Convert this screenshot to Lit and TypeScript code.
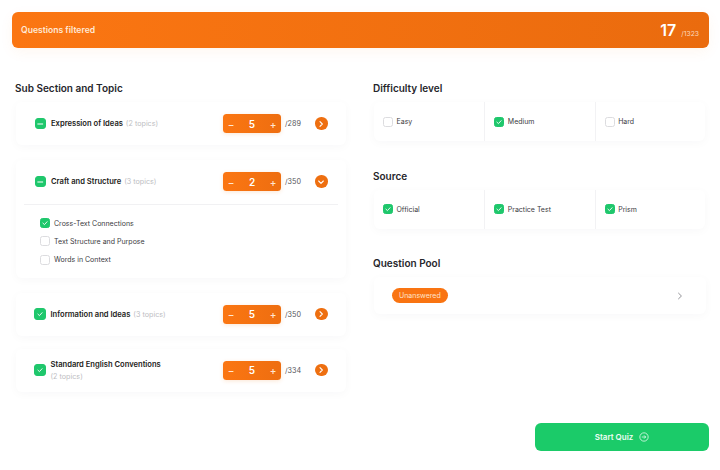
import { LitElement, html, css, nothing } from "lit";
import { customElement } from "lit/decorators.js";

const check = html`<svg viewBox="0 0 10 10" width="8" height="8"><path d="M2.4 5.2 4.3 7 7.6 3.4" fill="none" stroke="#fff" stroke-width="1.1" stroke-linecap="round" stroke-linejoin="round"/></svg>`;
const minus = html`<svg viewBox="0 0 12 12" width="10" height="10"><path d="M2.5 6h7" fill="none" stroke="#fff" stroke-width="1.4" stroke-linecap="round"/></svg>`;
const right = html`<svg viewBox="0 0 12 12" width="8" height="8"><path d="M4.5 2.5 8 6 4.5 9.5" fill="none" stroke="#fff" stroke-width="1.6" stroke-linecap="round" stroke-linejoin="round"/></svg>`;
const down = html`<svg viewBox="0 0 12 12" width="8" height="8"><path d="M2.5 4.5 6 8l3.5-3.5" fill="none" stroke="#fff" stroke-width="1.6" stroke-linecap="round" stroke-linejoin="round"/></svg>`;

@customElement("app-root")
export class AppRoot extends LitElement {
  static styles = css`
    :host { display: block; width: 720px; height: 470px; background: #fff; color: #1b1b1f; font-family: Inter, "Liberation Sans", sans-serif; overflow: hidden; }
    * { box-sizing: border-box; }
    .page { padding: 12px 11px 0 12px; display: flex; flex-direction: column; height: 470px; }
    .banner { height: 36px; border-radius: 6px; background: linear-gradient(90deg, #fb7612, #ea6b0e); color: #fff; display: flex; align-items: center; justify-content: space-between; padding: 0 10px 0 9px; box-shadow: 0 4px 14px rgba(240, 120, 20, .06); }
    .banner .lab { font-size: 8.6px; font-weight: 600; color: #ffe9d6; }
    .count { display: flex; align-items: baseline; gap: 5px; }
    .count b { font-size: 16px; font-weight: 600; }
    .count span { font-size: 6.8px; color: #fbd9bd; }
    .cols { display: grid; grid-template-columns: 332px 334px; column-gap: 26px; padding-left: 3px; margin-top: 34px; }
    .col { display: flex; flex-direction: column; }
    h2 { margin: 0 0 8px; font-size: 10px; line-height: 12px; font-weight: 600; color: #26262b; }
    .card { background: #fff; border-radius: 6px; box-shadow: 0 2px 10px rgba(30, 30, 60, .03); margin: 0 1px; }
    .topic { margin-bottom: 15px; }
    .topic.tight { margin-bottom: 13px; }
    .row { height: 43px; display: flex; align-items: center; padding: 0 0 0 19px; }
    .cb { flex: none; width: 10px; height: 10px; border-radius: 2.5px; display: flex; align-items: center; justify-content: center; border: 1px solid #dcdcdf; background: #fff; }
    .cb.on { background: #1fc76c; border-color: #1fc76c; }
    .cb.big { width: 10.5px; height: 10.5px; border-radius: 3px; }
    .cb.big.tick { width: 12px; height: 12px; margin-left: -1px; }
    .name { margin-left: 5.5px; padding-top: 1px; font-size: 7.6px; font-weight: 600; color: #1c1c20; white-space: nowrap; line-height: 12px; }
    .tick + .name { margin-left: 4.5px; }
    .muted { font-weight: 400; color: #bdbdc2; font-size: 7.2px; }
    .name .muted { margin-left: 1px; }
    .two .muted { display: block; margin-left: 0; }
    .spacer { flex: 1; }
    .stepper { width: 58px; height: 19px; border-radius: 3.5px; background: linear-gradient(90deg, #fb7612, #ee6e10); color: #fff; display: flex; align-items: center; justify-content: space-between; padding: 0 4px; font-size: 10px; font-weight: 600; box-shadow: 0 1px 4px rgba(240, 120, 20, .18); }
    .stepper i { font-style: normal; font-weight: 500; font-size: 10px; color: #ffe6d0; width: 8px; text-align: center; }
    .total { width: 30px; margin-left: 4px; font-size: 7.2px; color: #55555b; }
    .go { width: 12.5px; height: 12.5px; border-radius: 50%; background: #ee6f10; display: flex; align-items: center; justify-content: center; margin-right: 18.5px; }
    .divider { height: 1px; margin: 1px 8px 0; background: #f1f1f3; }
    .subs { padding: 13px 0 13px 24px; display: flex; flex-direction: column; gap: 8.3px; }
    .sub { height: 10px; display: flex; align-items: center; gap: 4px; font-size: 7px; color: #3b3b41; }
    .tiles { display: grid; grid-template-columns: repeat(3, 1fr); height: 39px; margin: 0 2px 28.5px 1px; }
    .tile { display: flex; align-items: center; gap: 3.5px; padding-left: 9px; font-size: 7px; color: #3b3b41; }
    .tile + .tile { border-left: 1px solid #f2f2f4; }
    .pool { height: 37px; display: flex; align-items: center; justify-content: space-between; padding: 0 22px 0 18px; }
    .pill { height: 15px; padding: 0 7px; border-radius: 8px; background: #f97412; color: #ffe3cc; font-size: 7px; display: flex; align-items: center; }
    .foot { position: absolute; left: 535px; top: 423px; width: 174px; height: 28px; border-radius: 6px; background: #1bcb69; color: #eefdf4; display: flex; align-items: center; justify-content: center; gap: 6px; font-size: 8px; font-weight: 600; }
  `;

  stepper(n: number) {
    return html`<div class="stepper"><i>−</i><span>${n}</span><i>+</i></div>`;
  }

  topic(name: string, topics: string, n: number, total: number, mode: "minus" | "check", open = false, two = false, tight = false) {
    return html`<div class="card topic ${tight ? "tight" : ""}">
      <div class="row">
        <span class="cb on big ${mode === "check" ? "tick" : ""}">${mode === "minus" ? minus : check}</span>
        <span class="name ${two ? "two" : ""}">${name} <span class="muted">${topics}</span></span>
        <span class="spacer"></span>
        ${this.stepper(n)}
        <span class="total">/${total}</span>
        <span class="go">${open ? down : right}</span>
      </div>
      ${open
        ? html`<div class="divider"></div>
            <div class="subs">
              ${[["Cross-Text Connections", true], ["Text Structure and Purpose", false], ["Words in Context", false]].map(
                ([t, on]) => html`<div class="sub"><span class="cb ${on ? "on" : ""}">${on ? check : nothing}</span>${t}</div>`
              )}
            </div>`
        : nothing}
    </div>`;
  }

  tiles(items: [string, boolean][]) {
    return html`<div class="card tiles">
      ${items.map(([t, on]) => html`<div class="tile"><span class="cb ${on ? "on" : ""}">${on ? check : nothing}</span>${t}</div>`)}
    </div>`;
  }

  render() {
    return html`<div class="page">
      <div class="banner">
        <span class="lab">Questions filtered</span>
        <span class="count"><b>17</b><span>/1323</span></span>
      </div>
      <div class="cols">
        <div class="col">
          <h2>Sub Section and Topic</h2>
          ${this.topic("Expression of Ideas", "(2 topics)", 5, 289, "minus")}
          ${this.topic("Craft and Structure", "(3 topics)", 2, 350, "minus", true)}
          ${this.topic("Information and Ideas", "(3 topics)", 5, 350, "check", false, false, true)}
          ${this.topic("Standard English Conventions", "(2 topics)", 5, 334, "check", false, true)}
        </div>
        <div class="col">
          <h2>Difficulty level</h2>
          ${this.tiles([["Easy", false], ["Medium", true], ["Hard", false]])}
          <h2>Source</h2>
          ${this.tiles([["Official", true], ["Practice Test", true], ["Prism", true]])}
          <h2>Question Pool</h2>
          <div class="card pool">
            <span class="pill">Unanswered</span>
            <svg viewBox="0 0 10 10" width="8" height="8"><path d="M3.2 1.5 6.8 5 3.2 8.5" fill="none" stroke="#77777d" stroke-width="1" stroke-linecap="round" stroke-linejoin="round"/></svg>
          </div>
        </div>
      </div>
      <div class="foot">
        Start Quiz
        <svg viewBox="0 0 12 12" width="10" height="10"><circle cx="6" cy="6" r="5" fill="none" stroke="#eefdf4" stroke-width=".9"/><path d="M3.8 6h4.2M6.4 4.4 8 6 6.4 7.6" fill="none" stroke="#eefdf4" stroke-width=".9" stroke-linecap="round" stroke-linejoin="round"/></svg>
      </div>
    </div>`;
  }
}
